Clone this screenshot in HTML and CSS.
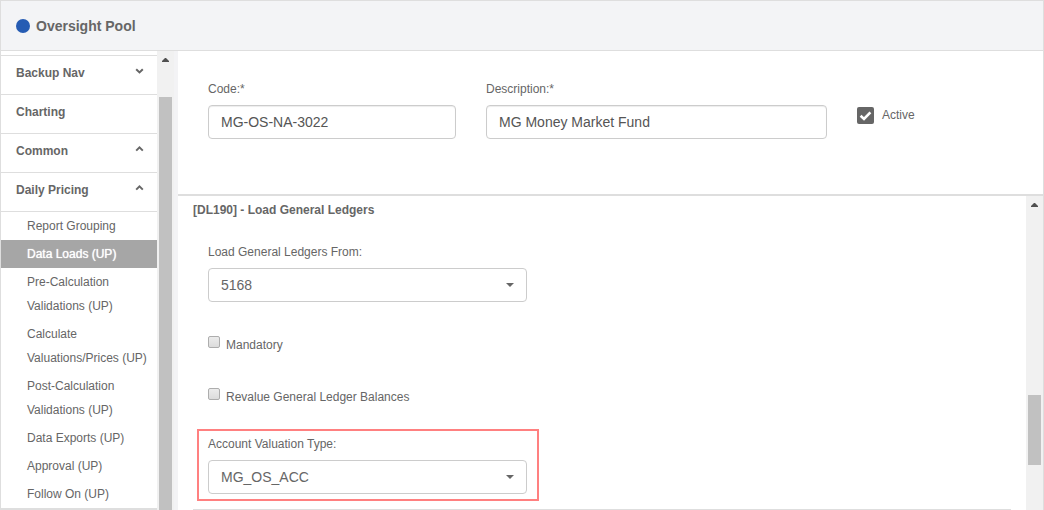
FILE: index.html
```html
<!DOCTYPE html>
<html lang="en">
<head>
<meta charset="utf-8">
<title>Oversight Pool</title>
<link rel="stylesheet" href="styles.css">
</head>
<body>
<div class="app">
  <header class="header">
    <span class="status-dot"></span>
    <h1 class="title">Oversight Pool</h1>
  </header>
  <div class="body">
    <nav class="sidebar">
      <div class="menu">
        <button class="group" type="button">Backup Nav
          <svg class="chevron" viewBox="0 0 9 6"><path d="M1.2 1.2 4.5 4.4 7.8 1.2"/></svg>
        </button>
        <button class="group" type="button">Charting</button>
        <button class="group" type="button">Common
          <svg class="chevron" viewBox="0 0 9 6"><path d="M1.2 4.6 4.5 1.4 7.8 4.6"/></svg>
        </button>
        <button class="group" type="button">Daily Pricing
          <svg class="chevron" viewBox="0 0 9 6"><path d="M1.2 4.6 4.5 1.4 7.8 4.6"/></svg>
        </button>
        <div class="submenu">
          <a class="item" href="#">Report Grouping</a>
          <a class="item item-current" href="#">Data Loads (UP)</a>
          <a class="item" href="#">Pre-Calculation Validations (UP)</a>
          <a class="item" href="#">Calculate Valuations/Prices (UP)</a>
          <a class="item" href="#">Post-Calculation Validations (UP)</a>
          <a class="item" href="#">Data Exports (UP)</a>
          <a class="item" href="#">Approval (UP)</a>
          <a class="item" href="#">Follow On (UP)</a>
        </div>
      </div>
      <div class="scrollbar scrollbar-menu">
        <svg class="scroll-arrow" viewBox="0 0 7 4"><path d="M0 4V3L3 0H4L7 3V4Z"/></svg>
        <div class="thumb"></div>
      </div>
    </nav>
    <main class="main">
      <section class="summary">
        <div class="field">
          <label class="label" for="code">Code:*</label>
          <input class="control" id="code" type="text" value="MG-OS-NA-3022">
        </div>
        <div class="field">
          <label class="label" for="description">Description:*</label>
          <input class="control" id="description" type="text" value="MG Money Market Fund">
        </div>
        <label class="active-check">
          <span class="tick-wrap">
            <input class="tick" type="checkbox" checked>
            <svg class="tick-mark" viewBox="0 0 17 17"><path d="M3.6 8.8 7 12 13.4 5.4"/></svg>
          </span>
          Active
        </label>
      </section>
      <div class="detail">
        <section class="settings">
          <h2 class="section-title">[DL190] - Load General Ledgers</h2>
          <div class="form">
            <div class="field">
              <label class="label" for="ledgers">Load General Ledgers From:</label>
              <div class="select-wrap">
                <select class="control select" id="ledgers"><option>5168</option></select>
                <svg class="caret" viewBox="0 0 8 4"><path d="M0 0H8L4 4Z"/></svg>
              </div>
            </div>
            <label class="option"><input class="box" type="checkbox">Mandatory</label>
            <label class="option"><input class="box" type="checkbox">Revalue General Ledger Balances</label>
            <div class="field field-marked">
              <label class="label" for="valuation">Account Valuation Type:</label>
              <div class="select-wrap">
                <select class="control select" id="valuation"><option>MG_OS_ACC</option></select>
                <svg class="caret" viewBox="0 0 8 4"><path d="M0 0H8L4 4Z"/></svg>
              </div>
            </div>
          </div>
          <hr class="rule">
        </section>
        <div class="scrollbar scrollbar-detail">
          <svg class="scroll-arrow" viewBox="0 0 7 4"><path d="M0 4V3L3 0H4L7 3V4Z"/></svg>
          <div class="thumb"></div>
        </div>
      </div>
    </main>
  </div>
</div>
</body>
</html>
```
FILE: styles.css
```css
* {
  box-sizing: border-box;
}

body {
  margin: 0;
  font-family: "Liberation Sans", Arial, sans-serif;
  font-size: 12px;
  line-height: 24px;
  color: #666;
  background: #fff;
}

.app {
  display: flex;
  flex-direction: column;
  height: 100vh;
  overflow: hidden;
  border: 1px solid #dedede;
  border-bottom: 0;
}

.header {
  display: flex;
  flex: none;
  align-items: center;
  gap: 6px;
  padding: 13px 15px 12px;
  background: #f3f4f6;
  border-bottom: 1px solid #dedede;
}

.status-dot {
  width: 14px;
  height: 14px;
  border-radius: 50%;
  background: #265cb3;
}

.title {
  margin: 0;
  font-size: 14px;
  line-height: 24px;
}

.body {
  display: flex;
  flex: 1;
  min-height: 0;
}

.sidebar {
  display: flex;
  flex: none;
  width: 177px;
  background: #f3f3f5;
}

.menu {
  width: 156px;
  padding-top: 4px;
  background: #fff;
}

.group {
  display: flex;
  align-items: center;
  justify-content: space-between;
  width: 100%;
  padding: 5px 13px 9px 15px;
  border: 0;
  border-top: 1px solid #dedede;
  background: none;
  font: bold 12px/24px "Liberation Sans", Arial, sans-serif;
  color: #666;
  text-align: left;
}

.chevron {
  width: 9px;
  height: 6px;
  margin-bottom: 4px;
  fill: none;
  stroke: #666;
  stroke-width: 2;
}

.submenu {
  border-top: 1px solid #dedede;
  border-bottom: 2px solid #dedede;
}

.item {
  display: block;
  padding: 2px 6px 2px 26px;
  color: #666;
  text-decoration: none;
}

.item-current {
  background: #a6a6a6;
  color: #fff;
  text-shadow: 0 0 1px #fff;
}

.scrollbar {
  display: flex;
  flex: none;
  flex-direction: column;
  align-items: center;
  width: 17px;
  padding-top: 7px;
  background: #f1f1f1;
}

.scroll-arrow {
  flex: none;
  width: 7px;
  height: 4px;
  fill: #505050;
}

.thumb {
  width: 13px;
  background: #c1c1c1;
}

.scrollbar-menu .thumb {
  flex: 1;
  margin-top: 35px;
}

.scrollbar-detail .thumb {
  height: 70px;
  margin-top: 188px;
}

.main {
  display: flex;
  flex: 1;
  flex-direction: column;
  min-width: 0;
}

.summary {
  display: grid;
  flex: none;
  grid-template-columns: 248fr 341fr 156fr;
  gap: 30px;
  padding: 26px 30px 55px;
  border-bottom: 2px solid #dedede;
}

.label {
  display: block;
  margin-bottom: 4px;
}

.control {
  display: block;
  width: 100%;
  height: 34px;
  padding: 0 12px;
  border: 1px solid #ccc;
  border-radius: 4px;
  background: #fff;
  box-shadow: inset 0 1px 1px rgba(0, 0, 0, 0.075);
  font: 14px "Liberation Sans", Arial, sans-serif;
  color: #555;
}

.active-check {
  display: flex;
  align-items: center;
  align-self: start;
  gap: 8px;
  padding-top: 26px;
}

.tick-wrap {
  position: relative;
  width: 17px;
  height: 17px;
}

.tick {
  appearance: none;
  display: block;
  width: 17px;
  height: 17px;
  margin: 0;
  border-radius: 2px;
  background: #666;
}

.tick-mark {
  position: absolute;
  inset: 0;
  fill: none;
  stroke: #fff;
  stroke-width: 2.6;
}

.detail {
  display: flex;
  flex: 1;
  min-height: 0;
}

.settings {
  flex: 1;
  min-width: 0;
  padding: 2px 15px 0;
}

.section-title {
  margin: 0 0 18px;
  font-size: 12px;
  line-height: 24px;
}

.form {
  width: 39%;
  margin-left: 15px;
}

.select-wrap {
  position: relative;
}

.select {
  appearance: none;
  box-shadow: none;
  color: #666;
}

.caret {
  position: absolute;
  top: 15px;
  right: 13px;
  width: 8px;
  height: 4px;
  fill: #666;
  pointer-events: none;
}

.option {
  display: flex;
  align-items: center;
  gap: 6px;
  margin-top: 28px;
}

.field + .option {
  margin-top: 31px;
}

.box {
  appearance: none;
  width: 12px;
  height: 12px;
  margin: 0 0 6px;
  border: 1px solid #adadad;
  border-radius: 2px;
  background: linear-gradient(#ececec, #dcdcdc);
}

.field-marked {
  position: relative;
  margin-top: 23px;
}

.field-marked::after {
  content: "";
  position: absolute;
  inset: -3px -12px -7px -11px;
  border: 2px solid #ff8080;
  pointer-events: none;
}

.rule {
  height: 2px;
  margin: 15px 0 0;
  border: 0;
  background: #dedede;
}
```
